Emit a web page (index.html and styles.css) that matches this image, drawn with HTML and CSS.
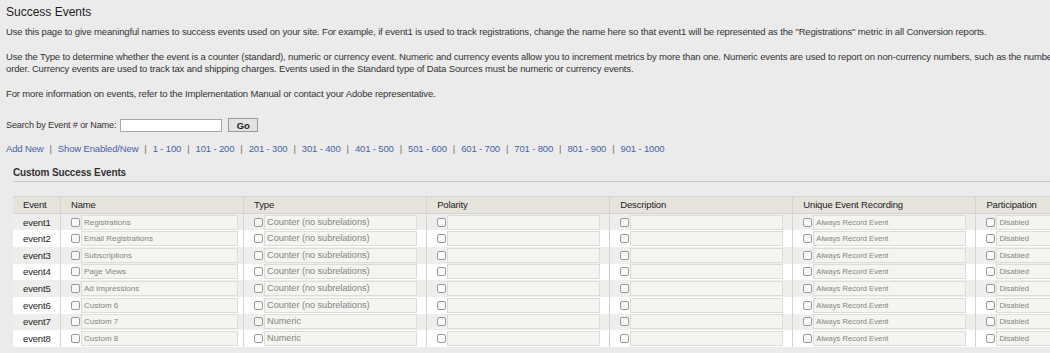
FILE: index.html
```html
<!DOCTYPE html>
<html lang="en">
<head>
    <meta charset="UTF-8">
    <title>Success Events</title>
    <link rel="stylesheet" href="styles.css">
</head>
<body>
    <div class="page">
        <h1>Success Events</h1>
        <p>Use this page to give meaningful names to success events used on your site. For example, if event1 is used to track registrations, change the name here so that event1 will be represented as the "Registrations" metric in all Conversion reports.</p>
        <p>Use the Type to determine whether the event is a counter (standard), numeric or currency event. Numeric and currency events allow you to increment metrics by more than one. Numeric events are used to report on non-currency numbers, such as the number of items in an<br>order. Currency events are used to track tax and shipping charges. Events used in the Standard type of Data Sources must be numeric or currency events.</p>
        <p>For more information on events, refer to the Implementation Manual or contact your Adobe representative.</p>

        <form class="search">
            <label for="search-input">Search by Event # or Name:</label>
            <input type="text" id="search-input">
            <button type="button">Go</button>
        </form>

        <div class="nav-links">
            <a href="#">Add New</a><span>|</span>
            <a href="#">Show Enabled/New</a><span>|</span>
            <a href="#">1 - 100</a><span>|</span>
            <a href="#">101 - 200</a><span>|</span>
            <a href="#">201 - 300</a><span>|</span>
            <a href="#">301 - 400</a><span>|</span>
            <a href="#">401 - 500</a><span>|</span>
            <a href="#">501 - 600</a><span>|</span>
            <a href="#">601 - 700</a><span>|</span>
            <a href="#">701 - 800</a><span>|</span>
            <a href="#">801 - 900</a><span>|</span>
            <a href="#">901 - 1000</a>
        </div>

        <h2>Custom Success Events</h2>

        <table class="events">
            <thead>
                <tr>
                    <th class="col-event">Event</th>
                    <th>Name</th>
                    <th>Type</th>
                    <th>Polarity</th>
                    <th>Description</th>
                    <th>Unique Event Recording</th>
                    <th>Participation</th>
                </tr>
            </thead>
            <tbody>
                <tr>
                    <td class="col-event">event1</td>
                    <td><span class="cb"></span><span class="field name">Registrations</span></td>
                    <td><span class="cb"></span><span class="field">Counter (no subrelations)</span></td>
                    <td><span class="cb"></span><span class="field"></span></td>
                    <td><span class="cb"></span><span class="field"></span></td>
                    <td><span class="cb"></span><span class="field small">Always Record Event</span></td>
                    <td><span class="cb"></span><span class="field small">Disabled</span></td>
                </tr>
                <tr>
                    <td class="col-event">event2</td>
                    <td><span class="cb"></span><span class="field name">Email Registrations</span></td>
                    <td><span class="cb"></span><span class="field">Counter (no subrelations)</span></td>
                    <td><span class="cb"></span><span class="field"></span></td>
                    <td><span class="cb"></span><span class="field"></span></td>
                    <td><span class="cb"></span><span class="field small">Always Record Event</span></td>
                    <td><span class="cb"></span><span class="field small">Disabled</span></td>
                </tr>
                <tr>
                    <td class="col-event">event3</td>
                    <td><span class="cb"></span><span class="field name">Subscriptions</span></td>
                    <td><span class="cb"></span><span class="field">Counter (no subrelations)</span></td>
                    <td><span class="cb"></span><span class="field"></span></td>
                    <td><span class="cb"></span><span class="field"></span></td>
                    <td><span class="cb"></span><span class="field small">Always Record Event</span></td>
                    <td><span class="cb"></span><span class="field small">Disabled</span></td>
                </tr>
                <tr>
                    <td class="col-event">event4</td>
                    <td><span class="cb"></span><span class="field name">Page Views</span></td>
                    <td><span class="cb"></span><span class="field">Counter (no subrelations)</span></td>
                    <td><span class="cb"></span><span class="field"></span></td>
                    <td><span class="cb"></span><span class="field"></span></td>
                    <td><span class="cb"></span><span class="field small">Always Record Event</span></td>
                    <td><span class="cb"></span><span class="field small">Disabled</span></td>
                </tr>
                <tr>
                    <td class="col-event">event5</td>
                    <td><span class="cb"></span><span class="field name">Ad Impressions</span></td>
                    <td><span class="cb"></span><span class="field">Counter (no subrelations)</span></td>
                    <td><span class="cb"></span><span class="field"></span></td>
                    <td><span class="cb"></span><span class="field"></span></td>
                    <td><span class="cb"></span><span class="field small">Always Record Event</span></td>
                    <td><span class="cb"></span><span class="field small">Disabled</span></td>
                </tr>
                <tr>
                    <td class="col-event">event6</td>
                    <td><span class="cb"></span><span class="field name">Custom 6</span></td>
                    <td><span class="cb"></span><span class="field">Counter (no subrelations)</span></td>
                    <td><span class="cb"></span><span class="field"></span></td>
                    <td><span class="cb"></span><span class="field"></span></td>
                    <td><span class="cb"></span><span class="field small">Always Record Event</span></td>
                    <td><span class="cb"></span><span class="field small">Disabled</span></td>
                </tr>
                <tr>
                    <td class="col-event">event7</td>
                    <td><span class="cb"></span><span class="field name">Custom 7</span></td>
                    <td><span class="cb"></span><span class="field">Numeric</span></td>
                    <td><span class="cb"></span><span class="field"></span></td>
                    <td><span class="cb"></span><span class="field"></span></td>
                    <td><span class="cb"></span><span class="field small">Always Record Event</span></td>
                    <td><span class="cb"></span><span class="field small">Disabled</span></td>
                </tr>
                <tr>
                    <td class="col-event">event8</td>
                    <td><span class="cb"></span><span class="field name">Custom 8</span></td>
                    <td><span class="cb"></span><span class="field">Numeric</span></td>
                    <td><span class="cb"></span><span class="field"></span></td>
                    <td><span class="cb"></span><span class="field"></span></td>
                    <td><span class="cb"></span><span class="field small">Always Record Event</span></td>
                    <td><span class="cb"></span><span class="field small">Disabled</span></td>
                </tr>
            </tbody>
        </table>
    </div>
</body>
</html>
```

FILE: styles.css
```css
html, body {
    margin: 0;
    padding: 0;
    overflow: hidden;
}
body {
    background-color: #ebebeb;
    font-family: "Liberation Sans", Arial, sans-serif;
    font-size: 9.5px;
    letter-spacing: -0.15px;
    color: #333;
}
.page {
    width: 1300px;
    padding: 4px 0 0 6px;
}
h1 {
    margin: 0;
    font-size: 12px;
    font-weight: normal;
    letter-spacing: 0;
    color: #1e1e1e;
    line-height: 16px;
}
p {
    margin: 6px 0 13px 0;
    line-height: 12px;
}
.search {
    display: flex;
    align-items: center;
    margin-top: 17px;
    height: 16px;
}
.search label {
    font-size: 9.1px;
    margin-right: 4px;
}
.search input {
    width: 96px;
    height: 9px;
    padding: 1px 2px;
    border: 1px solid #a8a8a8;
    background: white;
    margin: 0 6px 0 0;
}
.search button {
    width: 30px;
    height: 14px;
    padding: 0;
    font-family: inherit;
    font-size: 9.5px;
    font-weight: bold;
    background: #e2e2e2;
    border: 1px solid #9a9a9a;
    color: #222;
}
.nav-links {
    display: flex;
    gap: 6px;
    margin-top: 9px;
    line-height: 14px;
}
.nav-links a {
    color: #4763ab;
    text-decoration: none;
}
.nav-links span {
    color: #7d6a58;
}
h2 {
    margin: 10px 0 0 7px;
    padding-bottom: 1px;
    font-size: 10px;
    font-weight: bold;
    color: #333;
    border-bottom: 1px solid #c6c6c6;
    line-height: 14px;
}
.events {
    margin: 14px 0 0 7px;
    border-collapse: collapse;
    border-top: 1px solid #d6d6d2;
    table-layout: fixed;
    width: 1146px;
}
.events th, .events td {
    text-align: left;
    padding: 0 9px 0 10px;
    border-left: 1px solid #d4d4d0;
    white-space: nowrap;
    overflow: hidden;
}
.events thead tr {
    height: 17px;
}
.events th {
    background: #e5e3dc;
    font-weight: normal;
    color: #222;
    padding-bottom: 2px;
    border-bottom: 1px solid #d4d4d0;
}
.events th:first-child, .events td:first-child {
    border-left: none;
}
.events .col-event {
    width: 28px;
    color: #222;
}
.events tbody tr {
    height: 16.7px;
    background: #eeeeec;
}
.events tbody tr:nth-child(even) {
    background: #ffffff;
}
.cb {
    display: inline-block;
    width: 7px;
    height: 7px;
    border: 1px solid #9a9a9a;
    border-radius: 2px;
    background: #fafafa;
    vertical-align: middle;
    margin-right: 1px;
}
.field {
    display: inline-block;
    vertical-align: middle;
    width: 147px;
    height: 13px;
    line-height: 13px;
    padding: 0 2px;
    background: #f4f4f0;
    border: 1px solid #dcdcd8;
    color: #858585;
    font-size: 9.2px;
    letter-spacing: -0.05px;
    overflow: hidden;
}
.field.name {
    width: 151px;
    font-size: 8px;
    letter-spacing: 0;
}
.field.small {
    font-size: 7.6px;
    letter-spacing: 0;
}
```
